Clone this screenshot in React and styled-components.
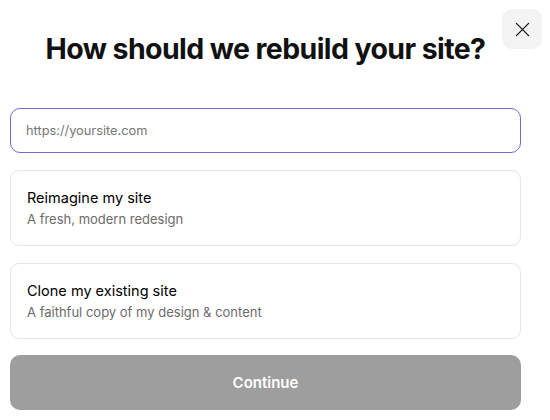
import React from "react";
import styled, { createGlobalStyle } from "styled-components";

const Global = createGlobalStyle`
  html, body { margin: 0; padding: 0; background: #ffffff; }
  body { font-family: Inter, "Noto Sans", sans-serif; color: #111111; }
  * { box-sizing: border-box; }
`;

const Modal = styled.div`
  position: relative;
  width: 550px;
  height: 420px;
  padding: 0 29px 0 10px;
  background: #ffffff;
`;

const CloseButton = styled.button`
  position: absolute;
  top: 9px;
  right: 8px;
  width: 40px;
  height: 40px;
  border: none;
  border-radius: 10px;
  background: #f3f3f3;
  display: flex;
  align-items: center;
  justify-content: center;
  padding: 0;
  cursor: pointer;
`;

const Column = styled.div`
  display: flex;
  flex-direction: column;
`;

const Title = styled.h1`
  margin: 0;
  padding-top: 31px;
  height: 108px;
  font-size: 28.5px;
  line-height: 36px;
  font-weight: 700;
  letter-spacing: -0.6px;
  text-align: center;
  color: #111111;
`;

const UrlInput = styled.input`
  height: 45px;
  width: 100%;
  border: 1.5px solid #7f65c9;
  border-radius: 10px;
  padding: 0 15px;
  font-family: Inter, "Noto Sans", sans-serif;
  font-size: 12.8px;
  color: #111;
  outline: none;
  &::placeholder { color: #767676; }
`;

const Options = styled.div`
  display: flex;
  flex-direction: column;
  gap: 17px;
  margin-top: 17px;
`;

const OptionCard = styled.button`
  height: 76px;
  width: 100%;
  border: 1px solid #e6e6e6;
  border-radius: 9px;
  background: #ffffff;
  display: flex;
  flex-direction: column;
  justify-content: center;
  align-items: flex-start;
  gap: 3px;
  padding: 0 16px;
  text-align: left;
  font-family: Inter, "Noto Sans", sans-serif;
  cursor: pointer;
`;

const OptionTitle = styled.span`
  font-size: 14.5px;
  line-height: 19px;
  font-weight: 400;
  color: #000000;
`;

const OptionDesc = styled.span`
  font-size: 13px;
  line-height: 18px;
  color: #6b6b6b;
`;

const ContinueButton = styled.button`
  margin-top: 16px;
  height: 55px;
  width: 100%;
  border: none;
  border-radius: 10px;
  background: #9e9e9e;
  color: #ffffff;
  font-family: Inter, "Noto Sans", sans-serif;
  font-size: 15px;
  font-weight: 600;
`;

const options = [
  { title: "Reimagine my site", desc: "A fresh, modern redesign" },
  { title: "Clone my existing site", desc: "A faithful copy of my design & content" },
];

export default function App() {
  return (
    <>
      <Global />
      <Modal>
        <Column>
          <Title>How should we rebuild your site?</Title>
          <UrlInput placeholder="https://yoursite.com" />
          <Options>
            {options.map((o) => (
              <OptionCard key={o.title}>
                <OptionTitle>{o.title}</OptionTitle>
                <OptionDesc>{o.desc}</OptionDesc>
              </OptionCard>
            ))}
          </Options>
          <ContinueButton disabled>Continue</ContinueButton>
        </Column>
        <CloseButton aria-label="Close">
          <svg width="15" height="15" viewBox="0 0 16 16" fill="none" stroke="#111" strokeWidth="1.3" strokeLinecap="round">
            <path d="M1.5 1.5 L14.5 14.5 M14.5 1.5 L1.5 14.5" />
          </svg>
        </CloseButton>
      </Modal>
    </>
  );
}
